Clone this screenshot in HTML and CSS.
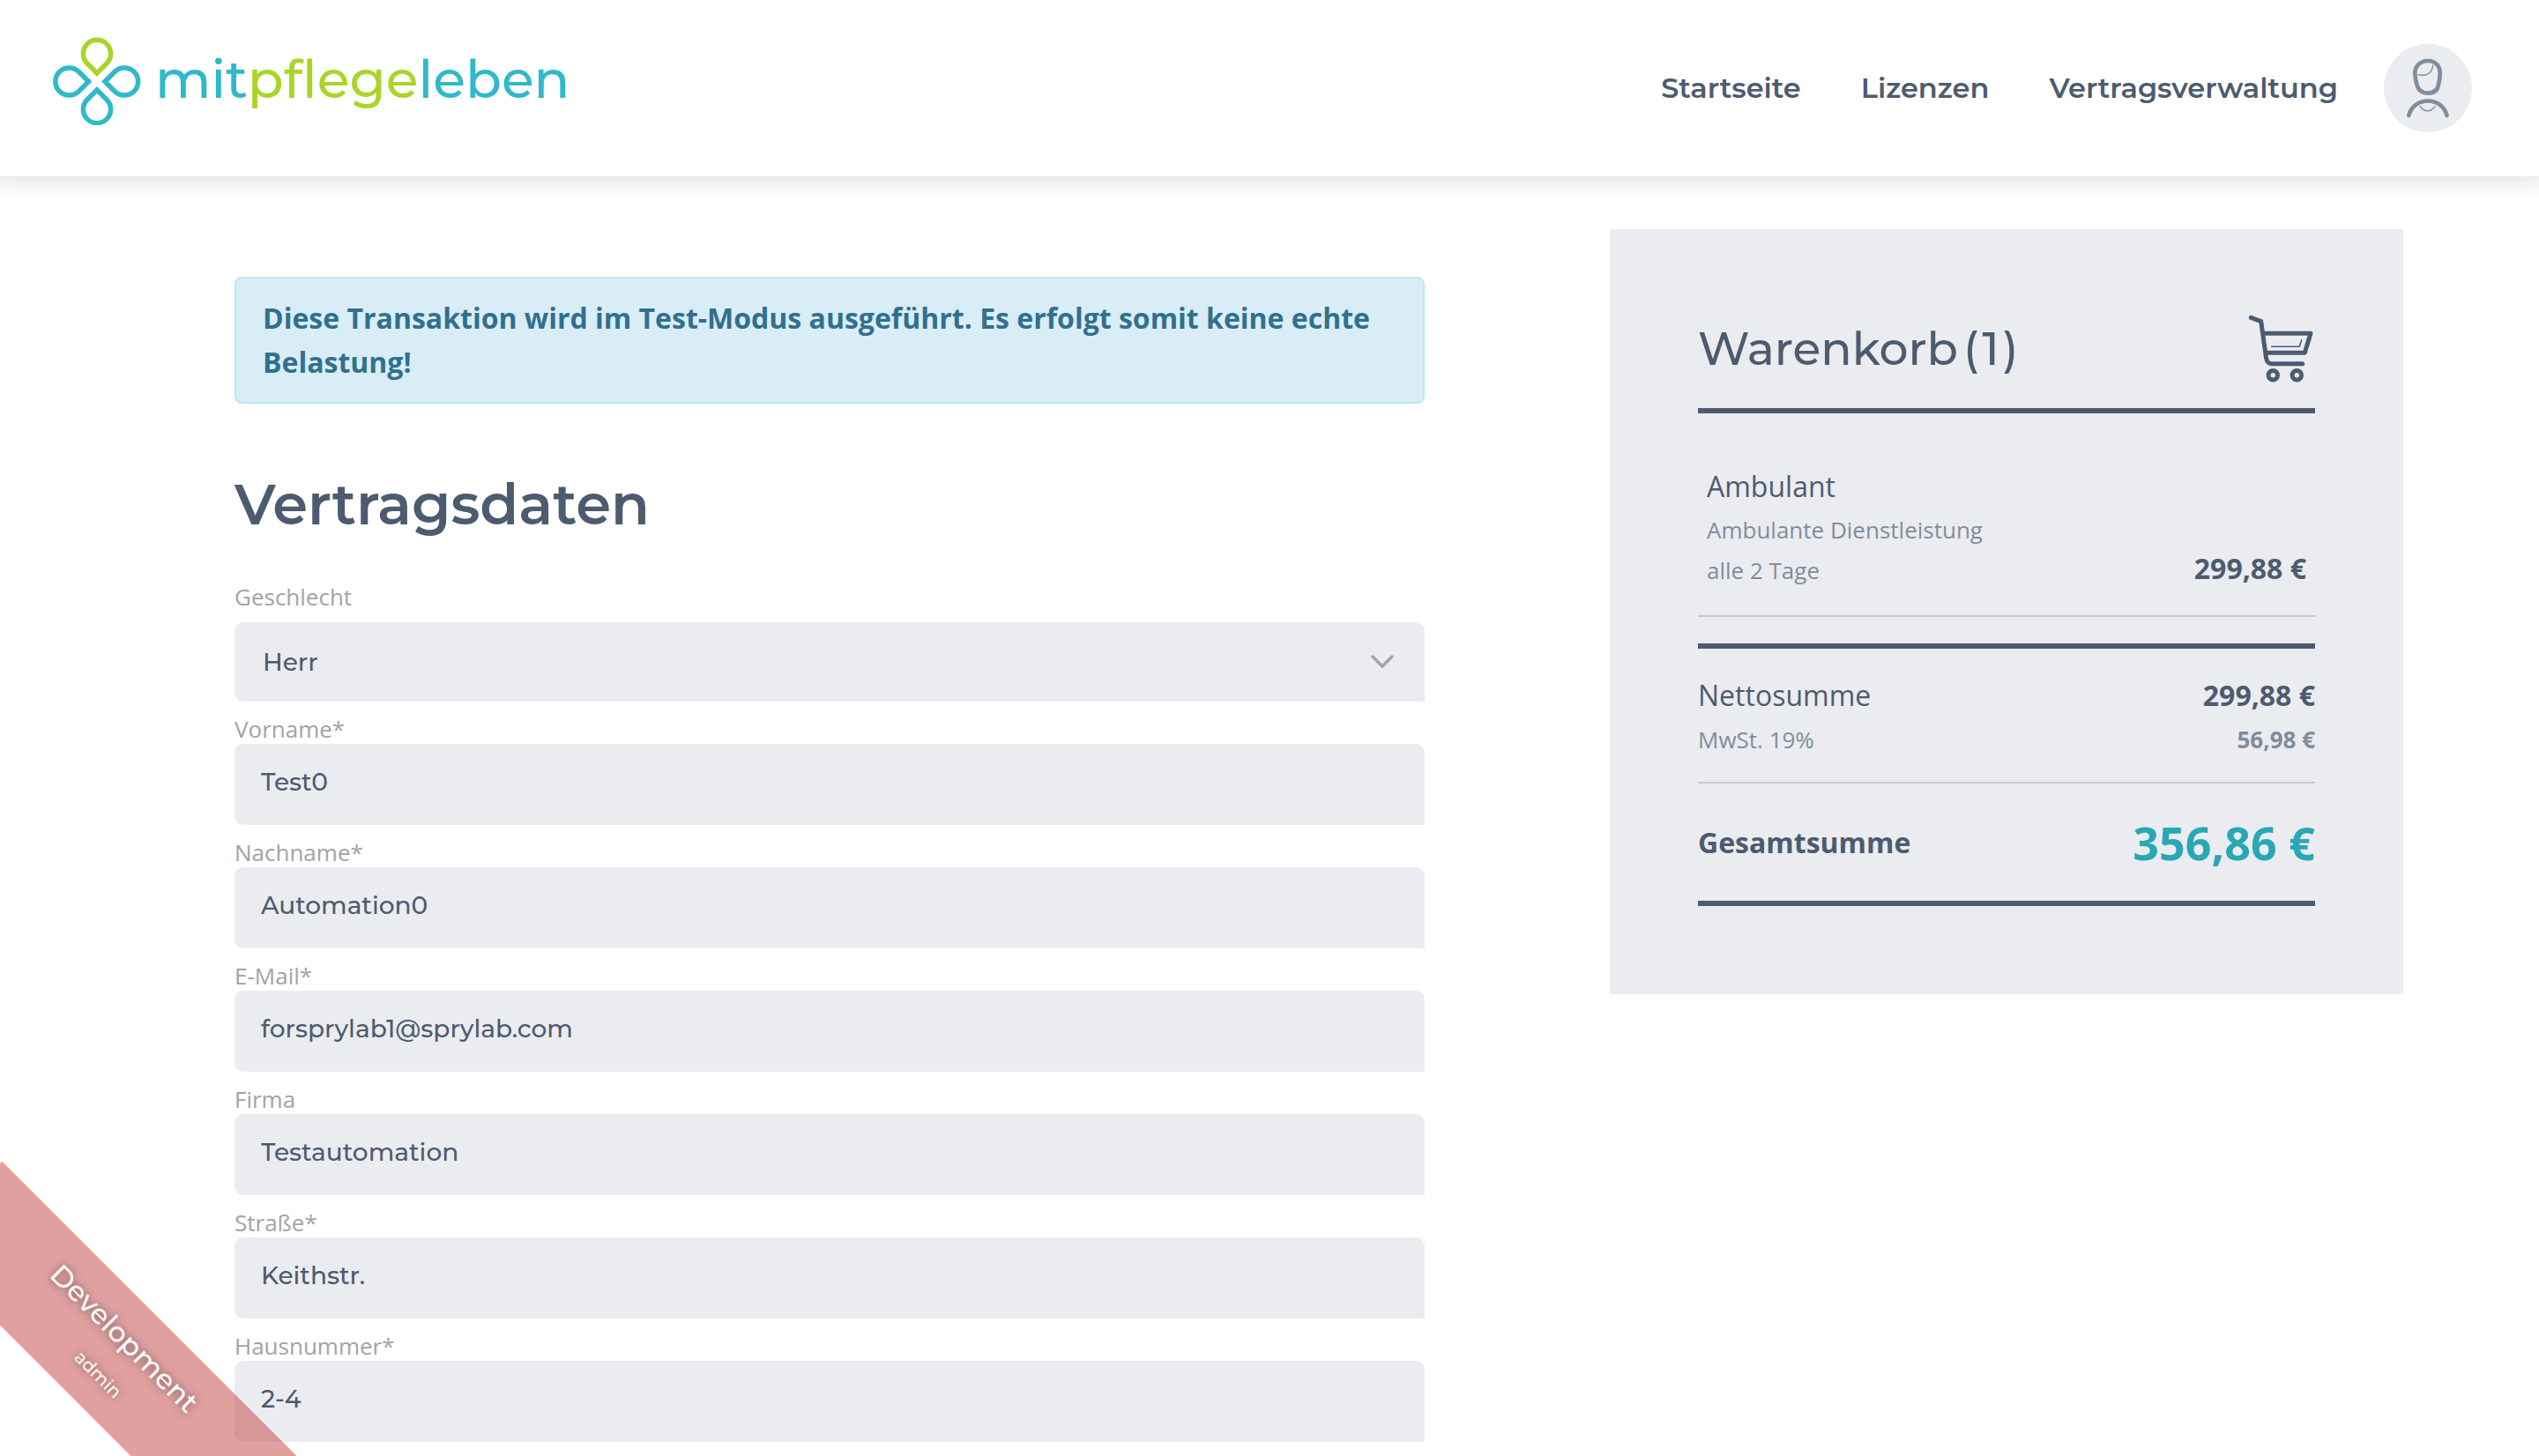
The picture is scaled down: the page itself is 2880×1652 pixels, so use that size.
FILE: index.html
```html
<!DOCTYPE html>
<html lang="de">
<head>
<meta charset="utf-8">
<title>mitpflegeleben – Vertragsdaten</title>
<link rel="stylesheet" href="styles.css">
</head>
<body>
<header class="header">
  <a class="logo" href="#">
    <svg class="logo-mark" viewBox="0 0 100 100" fill="none" stroke="#2fb9c9" stroke-width="5.500" aria-hidden="true">
      <path stroke="#aad528" d="M50 41 39 30A15.600 15.600 0 1 1 61 30Z"/>
      <path d="M50 60 39 71A15.600 15.600 0 1 0 61 71Z"/>
      <path d="M40.500 50.500 29.500 39.500A15.600 15.600 0 1 0 29.500 61.500Z"/>
      <path d="M59 50.500 70 39.500A15.600 15.600 0 1 1 70 61.500Z"/>
    </svg>
    <span class="logo-text">mit<span class="logo-accent">pflege</span>leben</span>
  </a>
  <nav class="nav">
    <a href="#">Startseite</a>
    <a href="#">Lizenzen</a>
    <a href="#">Vertragsverwaltung</a>
    <button class="avatar" type="button" aria-label="Profil">
      <svg viewBox="0 0 100 100" fill="none" stroke="#808d9c" stroke-linecap="round" aria-hidden="true">
        <path stroke-width="4.700" d="M50 19C41 19 35.300 25.500 35.300 33C35.300 38 36.500 42 37.500 46C39 52 43 55.700 50 55.700C57 55.700 61 52 62 46C63 42 63.700 38 63.700 33C63.700 25.500 59 19 50 19Z"/>
        <path stroke-width="1.500" d="M39.300 34.700C48 37 55 33 55.700 24.300"/>
        <path stroke-width="4.700" d="M28.300 81C34 59 66 59 71.500 81"/>
        <path stroke-width="1.500" d="M41.300 70.700C45 77.500 54 77.500 58 70.700"/>
      </svg>
    </button>
  </nav>
</header>
<main class="page">
  <section class="contract">
    <p class="alert">Diese Transaktion wird im Test-Modus ausgeführt. Es erfolgt somit keine echte Belastung!</p>
    <h1>Vertragsdaten</h1>
    <form class="form">
      <div class="field field-select">
        <label for="gender">Geschlecht</label>
        <div class="select">
          <select id="gender"><option>Herr</option><option>Frau</option></select>
          <svg class="chevron" viewBox="0 0 26 16" fill="none" stroke="#a3a3a3" stroke-width="3.500" stroke-linecap="round" aria-hidden="true"><path d="M2 2 13 13 24 2"/></svg>
        </div>
      </div>
      <div class="field"><label for="first">Vorname*</label><input id="first" type="text" value="Test0"></div>
      <div class="field"><label for="last">Nachname*</label><input id="last" type="text" value="Automation0"></div>
      <div class="field"><label for="mail">E-Mail*</label><input id="mail" type="email" value="forsprylab1@sprylab.com"></div>
      <div class="field"><label for="company">Firma</label><input id="company" type="text" value="Testautomation"></div>
      <div class="field"><label for="street">Straße*</label><input id="street" type="text" value="Keithstr."></div>
      <div class="field"><label for="number">Hausnummer*</label><input id="number" type="text" value="2-4"></div>
    </form>
  </section>
  <aside class="cart">
    <div class="cart-head">
      <h2>Warenkorb<span class="count"><span>(</span><span>1</span><span>)</span></span></h2>
      <svg class="cart-icon" viewBox="0 0 76 78" fill="none" stroke="#4d5b70" stroke-width="5" stroke-linecap="round" stroke-linejoin="round" aria-hidden="true">
        <path d="M3.300 4.300 14.700 8.700 20.500 50Q21.500 56.700 27 56.700H61.700"/>
        <path d="M17.500 22.300H71L64.300 44.300H20.700"/>
        <path stroke-width="1.500" d="M26.700 37.300H58.300L60.700 29.700"/>
        <circle cx="28.300" cy="69.700" r="5.200"/><circle cx="55.300" cy="69.700" r="5.200"/>
      </svg>
    </div>
    <div class="item">
      <div>
        <p class="item-name">Ambulant</p>
        <p class="note">Ambulante Dienstleistung</p>
        <p class="note">alle 2 Tage</p>
      </div>
      <strong>299,88 €</strong>
    </div>
    <div class="sums">
      <div class="row"><span>Nettosumme</span><strong>299,88 €</strong></div>
      <div class="row tax"><span>MwSt. 19%</span><strong>56,98 €</strong></div>
    </div>
    <div class="total"><strong>Gesamtsumme</strong><strong class="price">356,86 €</strong></div>
  </aside>
</main>
<div class="ribbon"><span class="ribbon-env">Development</span><span class="ribbon-user">admin</span></div>
</body>
</html>
```
FILE: styles.css
```css
* { box-sizing: border-box; }

html { overflow: hidden; }

body {
  margin: 0;
  background: #fff;
  color: #4d5b70;
  font-family: "Open Sans", sans-serif;
  font-size: 32px;
  line-height: 50px;
}

h1, h2, p { margin: 0; }

.header {
  display: flex;
  align-items: center;
  justify-content: space-between;
  height: 200px;
  padding: 0 76px 0 60px;
  box-shadow: 0 -16px 32px 16px rgba(0, 0, 0, 0.16);
  font-family: Montserrat, Inter, sans-serif;
}

.logo {
  display: flex;
  gap: 16px;
  margin-bottom: 16px;
  color: #2fb9c9;
  text-decoration: none;
}

.logo-mark { width: 100px; height: 100px; }
.logo-text { font-size: 60px; font-weight: 500; line-height: 96px; }
.logo-accent { color: #aad528; }

.nav { display: flex; align-items: center; gap: 68px; }

.nav a {
  color: #4d5b70;
  font-size: 32px;
  font-weight: 600;
  text-decoration: none;
}

.avatar {
  width: 100px;
  height: 100px;
  margin-left: -16px;
  padding: 0;
  border: 0;
  border-radius: 50%;
  background: #ebecf0;
}

.avatar svg { display: block; }

.page {
  display: grid;
  grid-template-columns: 1350fr 900fr;
  gap: 210px;
  align-items: start;
  padding: 60px 154px 0 266px;
}

.contract { padding-top: 54px; }

.alert {
  padding: 20px 30px;
  border: 2px solid #bce8f1;
  border-radius: 8px;
  background: #d9edf7;
  color: #31708f;
  font-weight: 700;
}

h1 {
  margin-top: 70px;
  font-family: Montserrat, Inter, sans-serif;
  font-size: 64px;
  font-weight: 600;
  line-height: 88px;
}

.form { margin-top: 46px; }
.field { display: flex; flex-direction: column; margin-top: 16px; }

label {
  padding-bottom: 2px;
  color: #a3a3a3;
  font-size: 26px;
  line-height: 30px;
}

.field-select { gap: 12px; }
.select { display: grid; align-items: center; }

.select select,
.field input {
  width: 100%;
  height: 92px;
  padding: 0 30px 6px;
  border: 0;
  border-radius: 10px 10px 0 10px;
  background: #ebecf0;
  color: #4d5b70;
  font-family: Montserrat, Inter, sans-serif;
  font-size: 28px;
  font-weight: 500;
}

.select select {
  grid-area: 1 / 1;
  height: 90px;
  padding: 0 32px;
  appearance: none;
}

.chevron {
  grid-area: 1 / 1;
  justify-self: end;
  width: 26px;
  margin-right: 35px;
  pointer-events: none;
}

.cart {
  padding: 100px;
  background: #ebecf0;
}

.cart-head {
  display: flex;
  justify-content: space-between;
  height: 109px;
  border-bottom: 6px solid #4d5b70;
}

.cart-head h2 {
  display: flex;
  gap: 6px;
  font-family: Montserrat, Inter, sans-serif;
  font-size: 52px;
  font-weight: 500;
  line-height: 72px;
}

.count { display: flex; gap: 4px; }

.cart-icon { width: 76px; height: 78px; margin-top: -4px; }

.item {
  display: flex;
  align-items: flex-end;
  justify-content: space-between;
  padding: 57px 10px 28px;
  border-bottom: 2px solid #c4cad4;
}

.item-name { line-height: 52px; }

.note {
  color: #808d9c;
  font-size: 26px;
  line-height: 46px;
}

.sums {
  margin-top: 30px;
  padding: 28px 0 23px;
  border-top: 6px solid #4d5b70;
  border-bottom: 2px solid #c4cad4;
}

.row { display: flex; justify-content: space-between; }
.tax { color: #808d9c; font-size: 26px; }

.total {
  display: flex;
  align-items: center;
  justify-content: space-between;
  padding: 32px 0 31px;
  border-bottom: 6px solid #4d5b70;
}

.price {
  color: #29a7b5;
  font-size: 52px;
  line-height: 70px;
}

.ribbon {
  position: fixed;
  bottom: 0;
  left: 0;
  display: flex;
  flex-direction: column;
  align-items: center;
  justify-content: center;
  gap: 10px;
  width: 480px;
  height: 133px;
  background: rgba(194, 66, 66, 0.5);
  color: #fff;
  font-family: Montserrat, Inter, sans-serif;
  text-shadow: 0 0 10px rgba(0, 0, 0, 0.5);
  transform: translate(-115px, -51px) rotate(45deg);
  pointer-events: none;
}

.ribbon-env { font-size: 32px; line-height: 44px; font-weight: 500; }
.ribbon-user { padding-left: 16px; font-size: 20px; line-height: 36px; font-weight: 500; }
```
